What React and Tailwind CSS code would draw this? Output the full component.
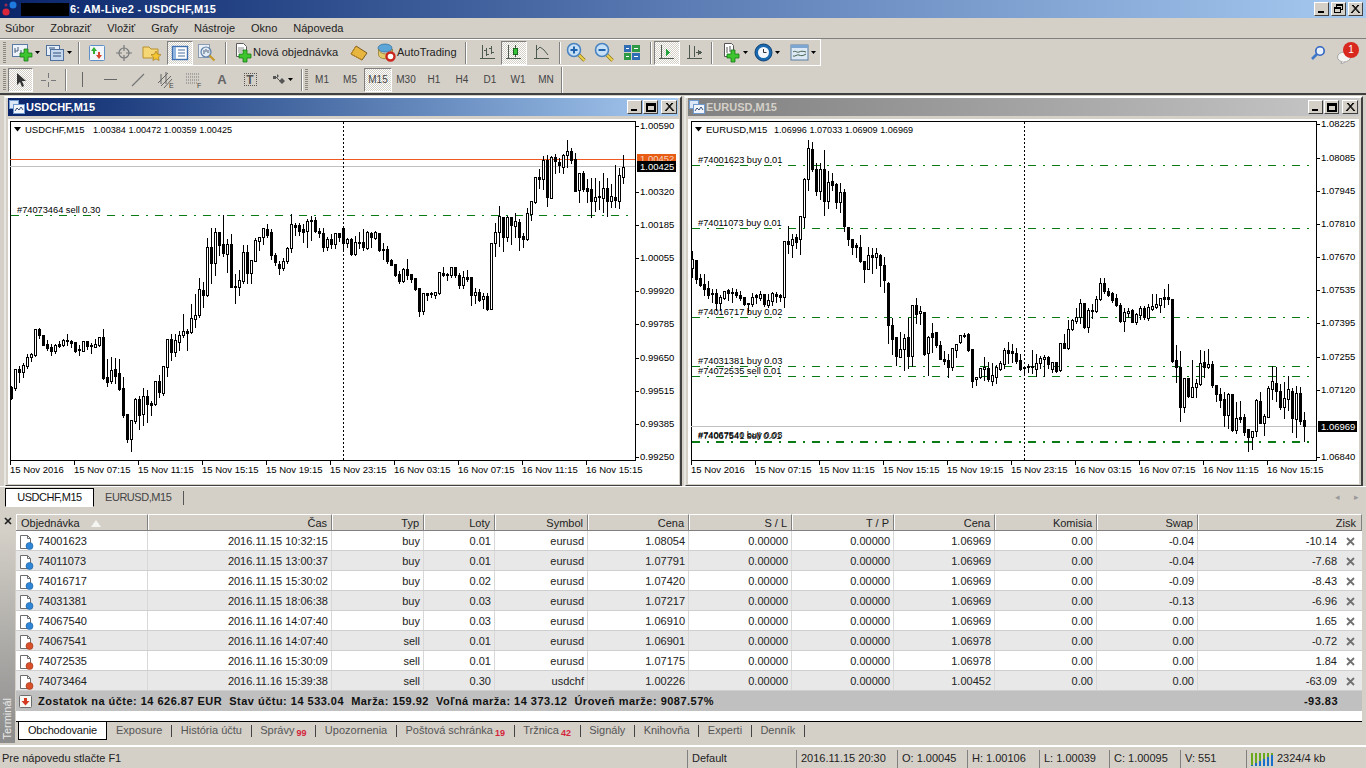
import * as React from "react"

// candles: [high, bodyTop, bodyBottom, low, filled] measured at 3x, divided when drawn
const leftA = [[795,800,835,838,1],[745,748,805,810,0],[735,748,755,785,1],[725,736,755,772,0],[700,712,738,745,0],[695,702,712,722,0],[625,628,705,708,0],[620,628,645,655,1],[645,646,674,676,1],[658,672,684,690,1],[670,682,692,705,1],[670,674,694,698,0],[660,672,678,682,1],[655,660,675,678,0],[640,660,662,675,1],[658,664,668,682,1],[662,666,692,696,1],[672,688,690,705,1],[660,662,692,694,0],[662,664,678,686,1],[665,676,679,700,1],[655,672,680,682,0],[648,650,674,678,0],[625,652,774,778,1],[715,772,786,798,1],[708,750,782,790,0],[710,748,768,790,1],[715,760,806,810,1],[768,804,885,890,1],[880,882,958,966,1],[898,900,956,992,0],[830,838,902,908,0],[825,838,885,928,1],[802,828,882,916,0],[808,828,852,905,1],[840,850,854,886,1],[782,784,852,856,0],[762,784,816,830,1],[736,737,820,825,0],[658,658,740,768,0],[640,658,695,720,1],[640,660,695,708,0],[630,646,665,690,0],[578,634,646,650,0],[625,634,638,690,1],[550,595,635,640,0],[520,584,596,620,0],[472,508,585,592,0],[482,510,525,560,1],[352,382,525,528,0],[322,382,430,490,1],[322,337,430,465,0],[335,337,374,404,1],[282,372,398,408,1],[355,373,402,455,0],[340,372,500,500,1],[458,498,500,548,1],[448,480,502,525,0],[372,396,484,490,0],[372,396,460,490,1],[420,420,460,488,0],[350,360,422,424,0],[348,352,362,390,0],[322,324,350,372,0],[310,328,346,350,1],[325,337,405,416,1],[395,405,426,435,1],[420,432,444,462,1],[410,422,444,450,0],[378,384,424,430,0],[280,313,385,395,0],[305,316,320,346,1],[306,316,332,345,1],[310,328,336,365,1],[295,302,334,380,0],[284,300,304,360,1],[288,300,332,335,1],[320,332,340,352,1],[320,340,380,392,1],[348,358,380,390,0],[340,358,372,385,1],[335,340,372,385,0],[335,338,350,362,1]]
const leftB = [[325,325,368,390,1],[352,356,368,382,0],[352,358,402,406,1],[345,366,403,405,0],[333,366,368,385,1],[325,366,382,390,1],[330,336,385,388,0],[333,340,352,380,1],[330,336,354,358,0],[338,340,390,394,1],[365,386,388,418,1],[376,388,422,428,1],[415,420,434,435,1],[430,432,465,467,1],[450,462,484,488,1],[440,446,484,486,0],[414,448,465,478,1],[460,462,476,485,1],[470,474,506,510,1],[502,505,572,587,1],[518,520,572,582,0],[515,520,524,540,1],[512,520,522,532,1],[512,516,524,534,0],[454,456,518,522,0],[437,458,465,468,1],[455,462,466,480,1],[438,440,466,470,0],[438,440,466,470,1],[455,466,494,505,1],[450,472,495,503,0],[448,472,476,482,1],[470,472,526,555,1],[502,515,526,548,0],[505,516,540,544,1],[515,528,538,565,0],[515,528,566,570,1],[365,368,566,568,0],[305,335,368,408,0],[255,288,336,378,0],[288,290,352,392,1],[285,292,352,362,0],[290,292,314,372,1],[275,304,318,350,0],[295,306,350,390,1],[335,348,356,380,1],[262,278,356,360,0],[242,244,282,300,0],[168,170,245,250,0],[145,172,178,205,1],[105,120,178,208,0],[102,120,230,258,1],[105,112,233,235,0],[100,112,124,160,1],[110,125,134,155,1],[100,105,140,158,0],[58,94,104,140,0],[82,92,120,128,1],[96,118,212,212,1],[155,160,210,245,0],[150,160,208,212,1],[175,205,212,245,1],[170,208,242,292,1],[172,232,242,272,0],[180,228,232,268,1],[155,205,233,275,0],[170,204,242,288,1],[190,228,242,262,0],[132,230,240,262,1],[140,165,242,265,0],[102,140,170,188,0]]
const rightA = [[390,418,445,470,0],[418,420,476,490,1],[460,474,495,498,1],[460,492,507,525,1],[480,504,525,535,1],[505,518,523,545,1],[505,520,548,570,1],[522,532,548,570,0],[510,512,534,538,0],[505,510,518,540,1],[502,515,520,545,1],[505,516,526,530,1],[510,524,535,540,1],[528,532,552,555,1],[548,550,552,575,1],[515,530,552,558,0],[518,526,530,550,1],[510,522,534,540,0],[520,522,552,558,1],[520,540,554,560,0],[512,520,542,556,0],[512,522,528,545,1],[518,526,530,542,1],[362,364,532,560,0],[315,364,372,400,1],[340,356,374,410,0],[340,352,366,385,1],[285,288,358,402,0],[170,178,290,320,0],[57,85,178,210,0],[62,88,146,152,1],[125,148,212,225,1],[125,148,212,238,0],[88,148,244,284,1],[150,186,244,264,0],[155,182,194,210,1],[185,192,245,263,1],[185,216,246,275,0],[205,216,318,332,1],[318,320,356,375,1],[355,356,380,402,1],[365,376,380,410,1],[342,380,422,425,1],[420,422,446,485,1],[378,404,446,448,0],[380,404,410,458,1],[380,400,410,445,0],[400,404,436,497,1],[408,436,480,515,1],[482,490,614,668,1],[590,616,656,702,1],[650,650,708,734,1],[634,688,710,712,0],[640,654,688,750,0],[590,652,708,745,1],[555,556,708,738,0],[530,556,582,610,1],[555,574,580,612,0],[575,577,702,705,1],[645,652,700,765,0],[606,638,652,695,1],[635,636,675,680,1],[660,676,716,718,1],[690,718,724,732,1],[700,720,740,770,1],[680,684,740,750,0],[670,672,690,712,0],[642,646,665,668,0],[635,644,648,650,1],[635,642,690,692,1],[684,686,782,800,1],[768,770,778,796,0],[740,744,772,775,0],[708,742,748,780,0],[722,744,778,782,1],[726,766,782,796,0],[732,740,770,788,0],[720,730,746,750,0],[680,690,732,745,0],[662,690,698,730,1],[670,694,700,725,1],[680,700,722,730,1],[698,720,748,750,1],[735,740,745,760,1]]
const rightB = [[728,738,742,755,0],[688,738,742,760,1],[700,728,746,768,0],[705,714,728,745,0],[702,712,718,768,0],[705,712,732,745,1],[722,726,748,756,0],[722,726,752,755,1],[668,670,750,752,0],[640,670,684,685,1],[598,626,684,686,0],[595,600,626,630,0],[560,590,604,608,0],[535,550,592,608,0],[545,548,622,625,1],[560,570,622,635,0],[548,570,572,595,1],[524,536,572,575,0],[472,490,536,540,0],[472,490,514,518,1],[500,514,524,528,1],[512,520,540,546,1],[518,534,554,558,1],[545,556,604,606,1],[560,576,604,632,0],[560,572,578,590,0],[565,570,606,607,1],[575,582,606,612,0],[555,565,586,596,0],[555,564,592,596,1],[548,562,594,600,0],[520,558,566,570,0],[518,553,560,565,0],[530,534,554,575,0],[504,530,536,560,1],[490,532,538,552,1],[535,538,722,726,1],[672,720,742,785,1],[690,742,860,902,1],[770,774,862,875,0],[770,774,828,830,1],[716,802,830,832,0],[775,790,802,832,0],[686,728,792,795,0],[690,726,740,772,1],[685,732,740,745,0],[720,732,796,800,1],[794,794,822,842,1],[800,822,840,860,1],[812,838,884,918,1],[815,822,884,924,0],[822,822,930,934,1],[842,895,930,940,0],[840,892,896,905,1],[880,892,936,945,1],[925,928,950,992,1],[933,934,952,988,0],[835,840,932,948,0],[812,844,908,910,1],[878,888,908,945,0],[795,805,890,890,0],[735,784,806,838,0],[738,788,812,842,1],[790,814,862,868,1],[782,835,860,895,0],[765,808,838,870,0],[800,812,895,935,1],[795,820,896,950,0],[798,820,904,912,1],[872,900,918,962,1]]

const Candles = ({ data, startX }) => (
    <g shapeRendering="crispEdges">
        {data.map((c, i) => {
            const x = startX + i * 4 + 0.5
            const y = (v) => Math.round(120 + v / 3) + 0.5
            return (
                <g key={i}>
                    <line x1={x} x2={x} y1={y(c[0])} y2={y(c[3])} stroke="#000" />
                    <rect x={x - 1} y={y(c[1])} width="2" height={Math.max(y(c[2]) - y(c[1]), 1)} fill={c[4] ? "#000" : "#fff"} stroke="#000" />
                </g>
            )
        })}
    </g>
)

const Chart = ({ viewX, box, name, quote, candles, price, gray, crossX, xLabels, yLabels, orders, orange }) => (
    <svg width="671" height="365" viewBox={`${viewX} 119 671 365`} className="block bg-white">
        <rect x={box[0] + 0.5} y="121.5" width={box[1] - box[0]} height="339" fill="#fff" stroke="#000" shapeRendering="crispEdges" />
        {orange && <line x1={box[0]} x2={box[1]} y1="159.5" y2="159.5" stroke="#f05a20" shapeRendering="crispEdges" />}
        <line x1={box[0]} x2={box[1]} y1={gray + 0.5} y2={gray + 0.5} stroke="#c0c0c0" shapeRendering="crispEdges" />
        <line x1={crossX + 0.5} x2={crossX + 0.5} y1="122" y2="460" stroke="#000" strokeDasharray="2 2" shapeRendering="crispEdges" />
        {orders.map((o, i) => (
            <line key={i} x1={box[0] + 1} x2={box[1] - 4} y1={o.y + 0.5} y2={o.y + 0.5} stroke="#0a7a14" strokeDasharray="8 7 2 7" shapeRendering="crispEdges" />
        ))}
        {candles}
        <path d={`M${box[0] + 4} 127h7l-3.5 4.5z`} fill="#000" />
        <text x={box[0] + 15} y="132.5" fontSize="9.5" fill="#000">{name}</text>
        <text x={box[0] + 83} y="132.5" fontSize="9.1" fill="#000">{quote}</text>
        {orders.filter((o) => o.label).map((o, i) => (
            <text key={i} x={box[0] + 7} y={o.ly} fontSize="9.25" fill="#000">{o.label}</text>
        ))}
        {yLabels.map(([t, y]) => (
            <g key={t}>
                <line x1={box[1]} x2={box[1] + 4} y1={y + 0.5} y2={y + 0.5} stroke="#000" shapeRendering="crispEdges" />
                <text x={box[1] + 5} y={y + 3} fontSize="9.5" fill="#000">{t}</text>
            </g>
        ))}
        {xLabels.map(([t, x]) => (
            <g key={x}>
                <line x1={x + 0.5} x2={x + 0.5} y1="461" y2="465" stroke="#000" shapeRendering="crispEdges" />
                <text x={x} y="472.5" fontSize="9.5" fill="#000">{t}</text>
            </g>
        ))}
        {orange && (
            <g>
                <rect x={box[1] + 2} y="154" width="39" height="8" fill="#e85c14" />
                <text x={box[1] + 5} y="162" fontSize="9.5" fill="#f4d4c0">1.00452</text>
            </g>
        )}
        <rect x={box[1] + 2} y={gray - 5} width="39" height="11" fill="#000" />
        <text x={box[1] + 5} y={gray + 3.5} fontSize="9.5" fill="#fff">{price}</text>
    </svg>
)

const xLeft = ["15 Nov 2016", "15 Nov 07:15", "15 Nov 11:15", "15 Nov 15:15", "15 Nov 19:15", "15 Nov 23:15", "16 Nov 03:15", "16 Nov 07:15", "16 Nov 11:15", "16 Nov 15:15"]

const usdOrders = [{ y: 215, label: "#74073464 sell 0.30", ly: 213 }]
const eurOrders = [
    { y: 165, label: "#74001623 buy 0.01", ly: 163 },
    { y: 228, label: "#74011073 buy 0.01", ly: 226 },
    { y: 317, label: "#74016717 buy 0.02", ly: 315 },
    { y: 366, label: "#74031381 buy 0.03", ly: 364 },
    { y: 376, label: "#74072535 sell 0.01", ly: 374 },
    { y: 441, label: "#74067540 buy 0.03", ly: 438 },
    { y: 442, label: "#74067541 sell 0.01", ly: 439 },
]

const WinBtn = ({ kind, size = "h-[14px] w-[15px]" }) => (
    <div className={`${size} flex items-center justify-center border border-t-white border-l-white border-r-[#404040] border-b-[#404040] bg-[#d4d0c8]`}>
        <svg width="11" height="10" viewBox="0 0 11 10" shapeRendering="crispEdges">
            {kind === "min" && <rect x="2" y="7" width="6" height="2" fill="#000" />}
            {kind === "max" && <path d="M1 1h9v8h-9zM1 2.5h9M2 3v5h7v-5z" fill="none" stroke="#000" />}
            {kind === "restore" && <path d="M3.5 2.5v-2h6v5h-2M1.5 3.5h6v5h-6zM3.5 1.5h6M1.5 4.5h6" fill="none" stroke="#000" />}
            {kind === "close" && <path d="M2 1l7 8M9 1l-7 8M3 1l7 8M8 1l-7 8" stroke="#000" strokeWidth="1" shapeRendering="auto" />}
        </svg>
    </div>
)

const ChartGlyph = () => (
    <svg width="16" height="14" viewBox="0 0 16 14" className="mr-[1px] shrink-0">
        <rect x="0.5" y="0.5" width="9" height="8" fill="#dce8f6" stroke="#6f9ad0" />
        <rect x="4.5" y="4.5" width="11" height="9" fill="#f2f6fb" stroke="#6f9ad0" />
        <path d="M6 11l2-3 2 2 2-3 2 3" fill="none" stroke="#33507a" />
    </svg>
)

const ChartWindow = ({ title, active, width, children }) => (
    <div className={`${width} h-[391px] border-2 border-t-white border-l-[#e8e6e0] border-r-[#404040] border-b-[#404040] bg-[#d4d0c8] pb-[2px] pl-[2px] pr-[2px] shrink-0`}>
        <div className={`flex h-[18px] items-center pl-[1px] pr-[1px] ${active ? "bg-gradient-to-r from-[#0a246a] to-[#a6caf0] text-white" : "bg-gradient-to-r from-[#808080] to-[#c8c8c8] text-[#d4d0c8]"}`}>
            <ChartGlyph />
            <span className="text-[11px] font-bold">{title}</span>
            <div className="ml-auto flex items-center gap-[1px]">
                <WinBtn kind="min" />
                <WinBtn kind="max" />
                <div className="w-[1px]" />
                <WinBtn kind="close" size="h-[14px] w-[16px]" />
            </div>
        </div>
        <div className="mt-[3px]">{children}</div>
    </div>
)

// toolbar icons
const Axes = ({ children, c = "#4d5a4f" }) => (
    <svg width="18" height="18" viewBox="0 0 18 18" shapeRendering="crispEdges">
        <path d="M3.5 1v14M1 14.5h15" stroke={c} fill="none" />
        {children}
    </svg>
)
const Arrow = () => (
    <svg width="5" height="4" viewBox="0 0 5 4" className="ml-[2px]"><path d="M0 0h5L2.5 3z" fill="#000" /></svg>
)
const Plus = ({ x, y }) => (
    <path d={`M${x + 4} ${y}h4v4h4v4h-4v4h-4v-4h-4v-4h4z`} fill="#3ec42f" stroke="#157a14" strokeWidth="0.8" />
)
const DocChart = () => (
    <svg width="22" height="19" viewBox="0 0 22 19">
        <rect x="1.5" y="1.5" width="15" height="12" fill="#eef3fa" stroke="#5b7ba5" />
        <path d="M4 5v5M7 4v4M4 8h3M10 7v4" stroke="#46607f" fill="none" />
        <Plus x={9} y={6} />
    </svg>
)
const Profiles = () => (
    <svg width="20" height="18" viewBox="0 0 20 18">
        <rect x="1.5" y="1.5" width="13" height="10" fill="#e6eef8" stroke="#4f6f9c" />
        <rect x="5.5" y="5.5" width="13" height="11" fill="#c5d8ee" stroke="#4f6f9c" />
        <path d="M8 9h8M8 12h8M4 4h6" stroke="#33507a" />
    </svg>
)
const Market = () => (
    <svg width="18" height="18" viewBox="0 0 18 18">
        <rect x="1.5" y="1.5" width="15" height="15" rx="1" fill="#f2f6fb" stroke="#5e8fc6" />
        <path d="M6 3l3 4h-2v3h-2v-3h-2z" fill="#2fae2f" />
        <path d="M11 15l-3-4h2v-3h2v3h2z" fill="#d9452c" />
    </svg>
)
const Cross = () => (
    <svg width="18" height="18" viewBox="0 0 18 18" fill="none" stroke="#77787a" strokeWidth="1.2">
        <circle cx="9" cy="9" r="5" />
        <path d="M9 1v6M9 11v6M1 9h6M11 9h6" />
    </svg>
)
const FolderStar = () => (
    <svg width="20" height="18" viewBox="0 0 20 18">
        <path d="M1 3h6l2 2h7v9H1z" fill="#f6d776" stroke="#b8902c" />
        <path d="M14 7l1.6 3.2 3.4.5-2.5 2.4.6 3.4-3.1-1.6-3.1 1.6.6-3.4-2.5-2.4 3.4-.5z" fill="#f3c531" stroke="#a67d1c" strokeWidth="0.7" />
    </svg>
)
const Nav = () => (
    <svg width="18" height="16" viewBox="0 0 18 16">
        <rect x="1.5" y="1.5" width="15" height="13" fill="#fff" stroke="#3f6fae" strokeWidth="1.4" />
        <rect x="2" y="2" width="3" height="12" fill="#8fb4e0" />
        <path d="M7 5h7M7 8h7M7 11h7" stroke="#4a6f9d" />
    </svg>
)
const Tester = () => (
    <svg width="20" height="20" viewBox="0 0 20 20">
        <rect x="1.5" y="1.5" width="11" height="13" fill="#eaf0f6" stroke="#8a9db5" />
        <circle cx="9" cy="9" r="5" fill="#dfe9f4" fillOpacity="0.7" stroke="#5c7fa8" strokeWidth="1.2" />
        <path d="M7 7v4M9 6v3M11 7v3" stroke="#4a6078" />
        <path d="M12.5 12.5l5 5" stroke="#c79a2c" strokeWidth="2.2" />
    </svg>
)
const NewOrder = () => (
    <svg width="17" height="21" viewBox="0 0 17 21" className="shrink-0">
        <path d="M1.5 1.5h7l3 3v10h-10z" fill="#fff" stroke="#5c5c5c" />
        <path d="M3 6h6M3 8h6M3 10h4" stroke="#8c8c8c" />
        <Plus x={4} y={8} />
    </svg>
)
const Expert = () => (
    <svg width="18" height="16" viewBox="0 0 18 16">
        <path d="M6 1l11 7-5 7L1 9z" fill="#e8b63f" stroke="#7c5a1a" />
        <path d="M6 1l-5 8 11 6" fill="none" stroke="#b7862a" />
    </svg>
)
const AutoIcon = () => (
    <svg width="19" height="19" viewBox="0 0 19 19" className="shrink-0">
        <ellipse cx="8" cy="5" rx="7" ry="4" fill="#5ba5d8" stroke="#2a6a9c" strokeWidth="0.7" />
        <path d="M1.5 6c1 6 12 7 14 0v6c-2 5-13 5-14 0z" fill="#e4c96a" stroke="#8d7528" strokeWidth="0.7" />
        <circle cx="13.5" cy="13.5" r="4" fill="#fff" stroke="#c9271d" strokeWidth="2.4" />
    </svg>
)
const Bars = () => (
    <Axes>
        <path d="M7.5 4v8M5 6h2.5M7.5 10h2.5M12.5 2v8M10 4h2.5M12.5 8h2.5" stroke="#4d5a4f" />
    </Axes>
)
const CandleIcon = () => (
    <Axes>
        <path d="M10.5 1v12" stroke="#3f5a3f" />
        <rect x="8.5" y="4.5" width="4" height="6" fill="#36c23a" stroke="#1c6a20" />
    </Axes>
)
const LineIcon = () => (
    <Axes>
        <path d="M4 6l3-3 4 3 4 5" stroke="#4d5a4f" fill="none" shapeRendering="auto" />
    </Axes>
)
const Glass = ({ minus }) => (
    <svg width="21" height="21" viewBox="0 0 21 21">
        <path d="M12 12l6.5 6.5" stroke="#8f7a1e" strokeWidth="3.6" />
        <path d="M12.5 12.5l6 6" stroke="#edd14d" strokeWidth="2" />
        <circle cx="8" cy="8" r="6.5" fill="#c8e0f6" stroke="#4a84c0" strokeWidth="1.6" />
        <path d={minus ? "M4.5 8h7" : "M4.5 8h7M8 4.5v7"} stroke="#1f63ad" strokeWidth="2" />
    </svg>
)
const Tile = () => (
    <svg width="18" height="17" viewBox="0 0 18 17" shapeRendering="crispEdges">
        <rect x="1" y="1" width="7" height="7" fill="#2f6db4" />
        <rect x="9" y="1" width="8" height="7" fill="#2e9a46" />
        <rect x="1" y="9" width="7" height="7" fill="#2e9a46" />
        <rect x="9" y="9" width="8" height="7" fill="#2f6db4" />
        <path d="M3 4.5h3M11 4.5h4M3 12.5h3M11 12.5h4" stroke="#fff" />
    </svg>
)
const Autoscroll = () => (
    <Axes>
        <path d="M8 5l4 3.5-4 3.5z" fill="#25a23c" />
    </Axes>
)
const Shift = () => (
    <Axes>
        <path d="M8.5 2v11M12 6l3 2.5-3 2.5z" stroke="#4d5a4f" fill="#6c5555" />
        <path d="M10 8.5h3" stroke="#4d5a4f" />
    </Axes>
)
const Indicators = () => (
    <svg width="20" height="21" viewBox="0 0 20 21" className="shrink-0">
        <path d="M3.5 1.5h7l2 2v11h-9z" fill="#fff" stroke="#555" />
        <path d="M6 5v6M9 4v6" stroke="#555" />
        <Plus x={6} y={8} />
    </svg>
)
const ClockIcon = () => (
    <svg width="19" height="19" viewBox="0 0 19 19" className="shrink-0">
        <circle cx="9.5" cy="9.5" r="8.5" fill="#1a68b0" stroke="#0e4070" />
        <circle cx="9.5" cy="9.5" r="5.5" fill="#f4f7fb" />
        <path d="M9.5 6v3.5h3" stroke="#333" fill="none" />
    </svg>
)
const Template = () => (
    <svg width="19" height="17" viewBox="0 0 19 17" className="shrink-0">
        <rect x="1" y="1" width="17" height="15" fill="#dce8f4" stroke="#5d7ea4" />
        <rect x="1" y="1" width="17" height="3" fill="#7ea6d2" />
        <path d="M3 8c2-2 4 1 6 0s4-1 7 0M3 12c2 1 4-2 6-1s4 1 7-1" stroke="#41604a" fill="none" />
    </svg>
)

const Grip = () => (
    <div className="mx-[2px] h-[22px] w-[3px] shrink-0 bg-[repeating-linear-gradient(to_bottom,#8a8880_0,#8a8880_1px,transparent_1px,transparent_2px)]" />
)
const Sep = ({ cls = "mx-[4px]" }) => <div className={`${cls} h-[22px] w-[2px] shrink-0 border-l border-r border-l-[#808080] border-r-white`} />

const Btn = ({ active, w = "w-[25px]", cls = "", children }) => (
    <div className={`flex h-[24px] ${w} ${cls} shrink-0 items-center justify-center ${active ? "border border-t-[#808080] border-l-[#808080] border-r-white border-b-white bg-[repeating-conic-gradient(#ffffff_0_25%,#d4d0c8_0_50%)] bg-[length:2px_2px]" : ""}`}>
        {children}
    </div>
)

const menus = ["Súbor", "Zobraziť", "Vložiť", "Grafy", "Nástroje", "Okno", "Nápoveda"]
const periods = ["M1", "M5", "M15", "M30", "H1", "H4", "D1", "W1", "MN"]

const Title = () => (
    <div className="flex h-[18px] shrink-0 items-center bg-gradient-to-r from-[#0a246a] via-[#5b7cb4] to-[#a6caf0] pr-[3px]">
        <svg width="18" height="16" viewBox="0 0 18 16" className="ml-[1px] shrink-0">
            <circle cx="12" cy="4" r="3.5" fill="#1f7ae0" />
            <circle cx="5" cy="11" r="3.6" fill="#d9263a" />
            <circle cx="5" cy="4" r="1.5" fill="#9b2c52" />
        </svg>
        <div className="ml-[2px] h-[13px] w-[48px] bg-black" />
        <span className="ml-[1px] text-[11px] font-bold tracking-[0.25px] text-white">6: AM-Live2 - USDCHF,M15</span>
        <div className="ml-auto flex items-center gap-[2px]">
            <WinBtn kind="min" />
            <WinBtn kind="restore" />
            <WinBtn kind="close" />
        </div>
    </div>
)

const Menu = () => (
    <div className="flex h-[20px] shrink-0 items-center gap-[16px] pl-[5px] text-[11px] text-[#222]">
        {menus.map((m) => <span key={m}>{m}</span>)}
    </div>
)

const ToolbarTop = () => (
    <div className="flex h-[28px] shrink-0 items-center border-t border-t-[#808080]">
        <div className="flex h-[27px] w-[821px] items-center border-t border-b border-r border-t-white border-b-white border-r-white pl-[1px]">
            <Grip />
            <div className="ml-[3px] flex w-[29px] items-center"><DocChart /><Arrow /></div>
            <div className="ml-[5px] flex w-[30px] items-center"><Profiles /><Arrow /></div>
            <Sep cls="ml-[3px] mr-[3px]" />
            <Btn cls="ml-[1px]"><Market /></Btn>
            <Btn w="w-[30px]"><Cross /></Btn>
            <Btn><FolderStar /></Btn>
            <Btn active w="w-[26px]" cls="ml-[3px]"><Nav /></Btn>
            <Btn w="w-[28px]"><Tester /></Btn>
            <Sep cls="ml-[4px] mr-[8px]" />
            <NewOrder />
            <span className="ml-[1px] w-[88px] shrink-0 whitespace-nowrap text-[11px] text-[#222]">Nová objednávka</span>
            <Btn w="w-[36px]"><Expert /></Btn>
            <AutoIcon />
            <span className="ml-[1px] w-[62px] shrink-0 whitespace-nowrap text-[11px] text-[#222]">AutoTrading</span>
            <Sep cls="ml-[6px] mr-[8px]" />
            <Btn w="w-[26px]"><Bars /></Btn>
            <Btn active w="w-[26px]"><CandleIcon /></Btn>
            <Btn w="w-[30px]"><LineIcon /></Btn>
            <Sep cls="ml-[2px] mr-[1px]" />
            <Btn w="w-[28px]"><Glass /></Btn>
            <Btn w="w-[28px]"><Glass minus /></Btn>
            <Btn w="w-[28px]"><Tile /></Btn>
            <Sep cls="ml-[4px] mr-[2px]" />
            <Btn active w="w-[26px]"><Autoscroll /></Btn>
            <Btn w="w-[30px]"><Shift /></Btn>
            <Sep cls="ml-[1px] mr-[8px]" />
            <div className="flex w-[33px] items-center"><Indicators /><Arrow /></div>
            <div className="flex w-[36px] items-center"><ClockIcon /><Arrow /></div>
            <div className="flex w-[30px] items-center"><Template /><Arrow /></div>
        </div>
        <div className="ml-auto mr-[6px] flex items-center gap-[10px]">
            <svg width="16" height="16" viewBox="0 0 16 16" className="mt-[1px]">
                <circle cx="10" cy="6" r="4.2" fill="#e8f0fb" stroke="#2f62c0" strokeWidth="1.6" />
                <path d="M7 9l-5 5" stroke="#3f78c8" strokeWidth="2.6" />
            </svg>
            <div className="relative h-[20px] w-[24px]">
                <svg width="16" height="14" viewBox="0 0 16 14" className="absolute bottom-[-1px] left-0">
                    <ellipse cx="8" cy="7" rx="6.5" ry="5" fill="#f4f4f2" stroke="#a8a8a8" />
                    <path d="M6 11l-1 3 4-2" fill="#f4f4f2" stroke="#a8a8a8" />
                </svg>
                <div className="absolute right-[1px] top-[-1px] flex h-[16px] w-[16px] items-center justify-center rounded-full bg-[#d9281e] text-[10px] text-white">1</div>
            </div>
        </div>
    </div>
)

const ToolbarBottom = () => (
    <div className="flex h-[27px] shrink-0 items-center">
        <div className="flex h-[26px] items-center pl-[1px]">
            <Grip />
            <Btn active>
                <svg width="14" height="16" viewBox="0 0 14 16"><path d="M3 1v12l3-3 2 5 2-1-2-5h4z" fill="#333" /></svg>
            </Btn>
            <Btn w="w-[30px]">
                <svg width="18" height="18" viewBox="0 0 18 18" stroke="#77787a" shapeRendering="crispEdges"><path d="M9.5 2v5M9.5 11v5M2 9.5h5M12 9.5h5" /></svg>
            </Btn>
            <Sep cls="ml-[2px] mr-[1px]" />
            <Btn w="w-[28px]"><div className="h-[15px] w-[1px] bg-[#666]" /></Btn>
            <Btn w="w-[28px]"><div className="h-[1px] w-[13px] bg-[#666]" /></Btn>
            <Btn w="w-[28px]">
                <svg width="16" height="16" viewBox="0 0 16 16"><path d="M2 14L14 2" stroke="#777" strokeWidth="1.2" /></svg>
            </Btn>
            <Btn w="w-[28px]">
                <svg width="18" height="18" viewBox="0 0 18 18"><path d="M1 12L11 2M4 15L14 5M7 17L15 8M4 3v10M9 1v12" stroke="#666" /><text x="12" y="17" fontSize="7" fill="#444">E</text></svg>
            </Btn>
            <Btn w="w-[28px]">
                <svg width="18" height="18" viewBox="0 0 18 18"><path d="M1 3h14M1 6h14M1 9h14M1 12h12" stroke="#777" strokeDasharray="1 1" /><text x="12" y="17" fontSize="7" fill="#444">F</text></svg>
            </Btn>
            <Btn w="w-[28px]"><span className="text-[13px] font-bold leading-none text-[#666]">A</span></Btn>
            <Btn w="w-[28px]">
                <div className="flex h-[13px] w-[13px] items-center justify-center border border-dotted border-[#555] text-[12px] font-bold leading-none text-[#555]">T</div>
            </Btn>
            <Btn w="w-[36px]">
                <svg width="14" height="14" viewBox="0 0 14 14"><path d="M1 3h3v3h-3zM5 1l2 2-2 2zM7 8l3-3 3 3-3 3z" fill="#555" /><path d="M3 3l6 6" stroke="#555" /></svg>
                <Arrow />
            </Btn>
            <Sep cls="ml-[1px]" />
            <Grip />
            <div className="ml-[-2px] flex items-center">
                {periods.map((p) => (
                    <div key={p} className={`flex h-[24px] w-[28px] items-center justify-center text-[10px] text-[#444] ${p === "M15" ? "border border-t-[#808080] border-l-[#808080] border-r-white border-b-white bg-[repeating-conic-gradient(#ffffff_0_25%,#d4d0c8_0_50%)] bg-[length:2px_2px]" : ""}`}>{p}</div>
                ))}
            </div>
            <div className="ml-[1px] h-[26px] w-[2px] border-l border-r border-l-[#808080] border-r-white" />
        </div>
    </div>
)

const ChartTabs = () => (
    <div className="flex h-[23px] shrink-0 items-end border-t border-t-white text-[11px]">
        <div className="ml-[5px] mb-[2px] flex h-[19px] w-[89px] items-center justify-center border border-black border-b-white bg-white tracking-[-0.45px] text-[#111]">USDCHF,M15</div>
        <div className="mb-[2px] ml-[11px] flex h-[19px] items-center tracking-[-0.45px] text-[#444]">EURUSD,M15</div>
        <div className="mb-[4px] ml-[12px] h-[14px] w-[1px] bg-[#555]" />
        <div className="mb-[5px] ml-auto mr-[7px] flex items-center gap-[14px] text-[9px] text-[#9a9a9a]">
            <span>◂</span>
            <span>▸</span>
        </div>
    </div>
)

const columns = [
    ["Objednávka", "text-left"], ["Čas", "text-right"], ["Typ", "text-right"], ["Loty", "text-right"], ["Symbol", "text-right"], ["Cena", "text-right"],
    ["S / L", "text-right"], ["T / P", "text-right"], ["Cena", "text-right"], ["Komisia", "text-right"], ["Swap", "text-right"], ["Zisk", "text-right"],
]
const gridCols = "grid grid-cols-[132px_184px_92px_71px_93px_101px_103px_102px_101px_102px_101px_164px]"

const trades = [
    ["74001623", "2016.11.15 10:32:15", "buy", "0.01", "eurusd", "1.08054", "0.00000", "0.00000", "1.06969", "0.00", "-0.04", "-10.14"],
    ["74011073", "2016.11.15 13:00:37", "buy", "0.01", "eurusd", "1.07791", "0.00000", "0.00000", "1.06969", "0.00", "-0.04", "-7.68"],
    ["74016717", "2016.11.15 15:30:02", "buy", "0.02", "eurusd", "1.07420", "0.00000", "0.00000", "1.06969", "0.00", "-0.09", "-8.43"],
    ["74031381", "2016.11.15 18:06:38", "buy", "0.03", "eurusd", "1.07217", "0.00000", "0.00000", "1.06969", "0.00", "-0.13", "-6.96"],
    ["74067540", "2016.11.16 14:07:40", "buy", "0.03", "eurusd", "1.06910", "0.00000", "0.00000", "1.06969", "0.00", "0.00", "1.65"],
    ["74067541", "2016.11.16 14:07:40", "sell", "0.01", "eurusd", "1.06901", "0.00000", "0.00000", "1.06978", "0.00", "0.00", "-0.72"],
    ["74072535", "2016.11.16 15:30:09", "sell", "0.01", "eurusd", "1.07175", "0.00000", "0.00000", "1.06978", "0.00", "0.00", "1.84"],
    ["74073464", "2016.11.16 15:39:38", "sell", "0.30", "usdchf", "1.00226", "0.00000", "0.00000", "1.00452", "0.00", "0.00", "-63.09"],
]

const RowIcon = ({ sell }) => (
    <svg width="15" height="16" viewBox="0 0 15 16" className="shrink-0">
        <path d="M1.5 1.5h7l3 3v10h-10z" fill="#fff" stroke="#6d6d6d" />
        <path d="M8.5 1.5v3h3" fill="none" stroke="#6d6d6d" />
        <circle cx="10.5" cy="12" r="3.5" fill={sell ? "#d9502a" : "#2f86d6"} stroke={sell ? "#9c3517" : "#1c5f9f"} strokeWidth="0.6" />
    </svg>
)

const Table = () => (
    <div className="flex h-[197px] flex-col text-[11px] text-[#222]">
        <div className={`${gridCols} h-[17px] shrink-0 border-b border-b-[#808080]`}>
            {columns.map(([name, align], i) => (
                <div key={i} className={`relative h-[16px] border-t border-l border-r border-t-white border-l-white border-r-[#808080] px-[4px] leading-[16px] ${align} ${i === 11 ? "pr-[5px]" : ""}`}>
                    {name}
                    {i === 0 && <span className="absolute left-[74px] top-[5px] h-0 w-0 border-x-[5px] border-b-[7px] border-x-transparent border-b-[#f4f4f0]" />}
                </div>
            ))}
        </div>
        {trades.map((row, r) => (
            <div key={row[0]} className={`${gridCols} h-[20px] shrink-0 border-b border-b-[#cfcfcf] ${r % 2 ? "bg-[#e8e8e8]" : "bg-white"}`}>
                {row.map((cell, c) => (
                    <div key={c} className={`flex h-[19px] items-center border-r border-r-[#d8d8d8] pt-[2px] ${c === 0 ? "pl-[3px]" : "justify-end pr-[3px]"} ${c === 11 ? "border-r-0 pr-[5px]" : ""}`}>
                        {c === 0 && <RowIcon sell={row[2] === "sell"} />}
                        <span className={c === 0 ? "ml-[4px]" : ""}>{cell}</span>
                        {c === 11 && (
                            <svg width="9" height="9" viewBox="0 0 9 9" className="ml-[9px] mr-[2px]"><path d="M1 1l7 7M8 1l-7 7" stroke="#707070" strokeWidth="1.8" /></svg>
                        )}
                    </div>
                ))}
            </div>
        ))}
        <div className="flex h-[20px] shrink-0 items-center bg-[#c0c0c0] pl-[3px] pr-[24px] font-bold tracking-[0.48px] text-[#111]">
            <svg width="13" height="13" viewBox="0 0 13 13" className="mr-[6px] shrink-0">
                <rect x="0.5" y="0.5" width="12" height="12" rx="1" fill="#f7f7f4" stroke="#6d6d6d" />
                <path d="M6.5 10.5l-4-4.5h2.5v-3h3v3h2.5z" fill="#d2391e" />
            </svg>
            <span className="whitespace-pre">Zostatok na účte: 14 626.87 EUR  Stav účtu: 14 533.04  Marža: 159.92  Voľná marža: 14 373.12  Úroveň marže: 9087.57%</span>
            <span className="ml-auto">-93.83</span>
        </div>
    </div>
)

const tabs = [
    ["Exposure"], ["História účtu"], ["Správy", "99"], ["Upozornenia"], ["Poštová schránka", "19"], ["Tržnica", "42"], ["Signály"], ["Knihovňa"], ["Experti"], ["Denník"],
]

const TerminalTabs = () => (
    <div className="flex h-[19px] shrink-0 items-start border-t border-t-black text-[11px]">
        <div className="ml-[2px] flex h-[18px] w-[89px] items-center justify-center border-b border-l border-r border-b-black border-l-black border-r-black bg-white tracking-[-0.15px] text-[#111]">Obchodovanie</div>
        <div className="ml-[9px] flex h-[17px] items-center text-[#555]">
            {tabs.map(([t, n]) => (
                <React.Fragment key={t}>
                    <span>{t}</span>
                    {n && <span className="ml-[2px] mt-[5px] text-[9px] font-bold leading-none text-[#d4243a]">{n}</span>}
                    <span className="mx-[8.67px] h-[12px] w-[1px] bg-[#444]" />
                </React.Fragment>
            ))}
        </div>
    </div>
)

const Terminal = () => (
    <div className="flex h-[236px] shrink-0">
        <div className="flex w-[16px] shrink-0 flex-col">
            <div className="flex h-[21px] items-center justify-center pt-[2px]">
                <svg width="8" height="8" viewBox="0 0 8 8"><path d="M1 1l6 6M7 1l-6 6" stroke="#222" strokeWidth="1.7" /></svg>
            </div>
            <div className="mt-[1px] flex h-[212px] w-[15px] items-start justify-center bg-gradient-to-b from-[#d4d0c8] to-[#8c8c8c] pb-[3px]">
                <span className="mt-auto rotate-180 text-[11px] leading-none text-[#e8e8e8] [writing-mode:vertical-rl]">Terminál</span>
            </div>
        </div>
        <div className="flex w-[1346px] flex-col pt-[5px]">
            <Table />
            <div className="h-[10px] shrink-0 bg-white" />
            <TerminalTabs />
        </div>
    </div>
)

const StatusCell = ({ w, children }) => (
    <div className={`${w} flex h-[18px] shrink-0 items-center border-l border-l-[#808080] pl-[4px]`}>{children}</div>
)

const Status = () => (
    <div className="flex h-[23px] shrink-0 items-center border-t-2 border-t-white pl-[2px] pt-[2px] text-[11px] text-[#222]">
        <div className="w-[685px] shrink-0">Pre nápovedu stlačte F1</div>
        <StatusCell w="w-[109px]">Default</StatusCell>
        <StatusCell w="w-[101px]">2016.11.15 20:30</StatusCell>
        <StatusCell w="w-[70px]">O: 1.00045</StatusCell>
        <StatusCell w="w-[72px]">H: 1.00106</StatusCell>
        <StatusCell w="w-[70px]">L: 1.00039</StatusCell>
        <StatusCell w="w-[71px]">C: 1.00095</StatusCell>
        <StatusCell w="w-[66px]">V: 551</StatusCell>
        <StatusCell w="w-[118px]">
            <svg width="24" height="14" viewBox="0 0 24 14" className="mr-[2px] shrink-0" shapeRendering="crispEdges">
                {Array.from({ length: 12 }).map((_, i) => (
                    <g key={i}>
                        <rect x={i * 2} y="1" width="2" height={12 - i} fill={i % 2 ? "#d4d0c8" : "#6aa81e"} />
                        <rect x={i * 2} y={13 - i} width="2" height={i + 1} fill={i % 2 ? "#d4d0c8" : "#1870c8"} />
                    </g>
                ))}
            </svg>
            2324/4 kb
        </StatusCell>
    </div>
)

export default function App() {
    return (
        <div className="flex h-[768px] w-[1366px] flex-col overflow-hidden bg-[#d4d0c8] font-['Liberation_Sans',Arial,sans-serif] text-[11px]">
            <Title />
            <Menu />
            <ToolbarTop />
            <ToolbarBottom />
            <div className="flex h-[393px] shrink-0 gap-[2px] border-t-2 border-t-[#404040] pl-[4px] pt-[1px]">
                <ChartWindow title="USDCHF,M15" active width="w-[678px]">
                    <Chart
                        viewX={8}
                        box={[10, 635]}
                        name="USDCHF,M15"
                        quote="1.00384 1.00472 1.00359 1.00425"
                        price="1.00425"
                        gray={166}
                        orange
                        crossX={343}
                        orders={usdOrders}
                        xLabels={xLeft.map((t, i) => [t, 10 + i * 64])}
                        yLabels={[["1.00590", 126], ["1.00320", 192], ["1.00185", 225], ["1.00055", 258], ["0.99920", 291], ["0.99785", 324], ["0.99650", 358], ["0.99515", 391], ["0.99385", 424], ["0.99250", 457]]}
                        candles={<><Candles data={leftA} startX={11} /><Candles data={leftB} startX={343} /></>}
                    />
                </ChartWindow>
                <ChartWindow title="EURUSD,M15" width="w-[679px]">
                    <Chart
                        viewX={688}
                        box={[691, 1316]}
                        name="EURUSD,M15"
                        quote="1.06996 1.07033 1.06909 1.06969"
                        price="1.06969"
                        gray={426}
                        crossX={1024}
                        orders={eurOrders}
                        xLabels={xLeft.map((t, i) => [t, 691 + i * 64])}
                        yLabels={[["1.08225", 124], ["1.08085", 158], ["1.07945", 191], ["1.07810", 224], ["1.07670", 257], ["1.07535", 290], ["1.07395", 323], ["1.07255", 357], ["1.07120", 390], ["1.06840", 457]]}
                        candles={<><Candles data={rightA} startX={692} /><Candles data={rightB} startX={1028} /></>}
                    />
                </ChartWindow>
            </div>
            <ChartTabs />
            <Terminal />
            <Status />
        </div>
    )
}
